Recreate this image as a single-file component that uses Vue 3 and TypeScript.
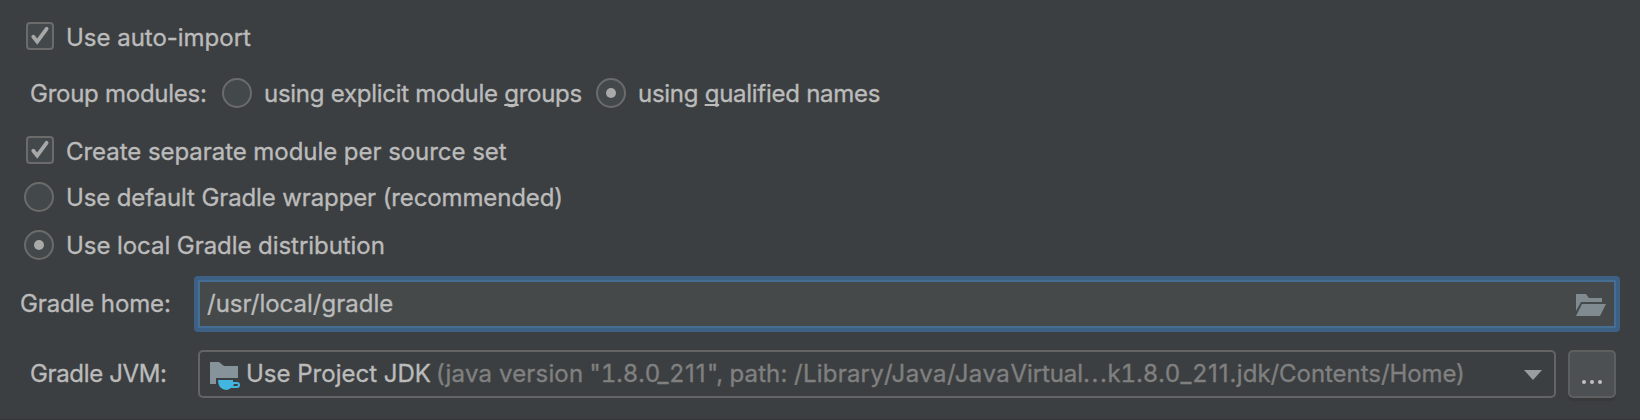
<script setup lang="ts">
import { ref } from 'vue'

const autoImport = ref(true)
const separateModules = ref(true)
const grouping = ref<'explicit' | 'qualified'>('qualified')
const distribution = ref<'wrapper' | 'local'>('local')
const gradleHome = ref('/usr/local/gradle')

interface Segment { text: string; width: number; spacing: number; tabular?: boolean }

const jdkDetails: Segment[] = [
  { text: '(java version ', width: 153.5, spacing: 0.17 },
  { text: '"1.8.0', width: 68, spacing: 0, tabular: true },
  { text: '_211', width: 49.5, spacing: 1 },
  { text: '", ', width: 22.5, spacing: 0 },
  { text: 'path: ', width: 64.5, spacing: 0.11 },
  { text: '/Library', width: 90, spacing: 0.23 },
  { text: '/Java', width: 63, spacing: 0.43 },
  { text: '/Java', width: 63.5, spacing: 0.5 },
  { text: 'Virtual', width: 72.5, spacing: -0.09 },
  { text: '...', width: 24.5, spacing: 1.6 },
  { text: 'k', width: 13, spacing: 0 },
  { text: '1.8.0', width: 60, spacing: 0.08, tabular: true },
  { text: '_211', width: 49, spacing: 1 },
  { text: '.jdk', width: 41, spacing: 0.22 },
  { text: '/Contents', width: 110.5, spacing: -0.05 },
  { text: '/Home)', width: 84, spacing: -0.1 },
]
</script>

<template>
  <main class="panel">
    <label class="row auto" @click="autoImport = !autoImport">
      <span class="box"><svg v-if="autoImport" viewBox="0 0 28 28"><path d="M7.3 14.8 11.2 19.7 20.6 6.8" /></svg></span>
      <span class="text t-auto">Use auto-import</span>
    </label>

    <div class="row modules">
      <span class="caption t-group">Group modules:</span>
      <label class="option explicit" @click="grouping = 'explicit'">
        <span class="radio" :class="{ on: grouping === 'explicit' }"></span>
        <span class="text t-radio">using explicit module <u>g</u>roups</span>
      </label>
      <label class="option" @click="grouping = 'qualified'">
        <span class="radio" :class="{ on: grouping === 'qualified' }"></span>
        <span class="text t-radio">using <u>q</u>ualified names</span>
      </label>
    </div>

    <label class="row separate" @click="separateModules = !separateModules">
      <span class="box"><svg v-if="separateModules" viewBox="0 0 28 28"><path d="M7.3 14.8 11.2 19.7 20.6 6.8" /></svg></span>
      <span class="text t-create">Create separate module per source set</span>
    </label>

    <label class="row wrapper" @click="distribution = 'wrapper'">
      <span class="radio" :class="{ on: distribution === 'wrapper' }"></span>
      <span class="text t-wrapper">Use default Gradle wrapper (recommended)</span>
    </label>

    <label class="row local" @click="distribution = 'local'">
      <span class="radio" :class="{ on: distribution === 'local' }"></span>
      <span class="text t-local">Use local Gradle distribution</span>
    </label>

    <div class="row home">
      <span class="caption t-home">Gradle home:</span>
      <div class="field">
        <span class="value">{{ gradleHome }}</span>
        <svg class="open" viewBox="0 0 30 22">
          <path d="M0 0H10L13 4H26V8H5L0 17Z" />
          <path d="M6 10H30L24 22H0Z" />
        </svg>
      </div>
    </div>

    <div class="row jvm">
      <span class="caption t-jvm">Gradle JVM:</span>
      <div class="combo">
        <svg class="jdk" viewBox="0 0 30 28">
          <path class="folder" d="M0 0H9L14 4H28V16H6V22H0Z" />
          <path class="cup" fill-rule="evenodd" d="M8 18H23V20H27A3 3 0 0 1 27 26H21Q18.500 28 16 28Q8 27 8 18ZM24 22L23 24H27A1 1 0 0 0 27 22Z" />
        </svg>
        <span class="name">Use Project JDK</span>
        <span class="details"><span
          v-for="(part, i) in jdkDetails"
          :key="i"
          class="part"
          :class="{ tabular: part.tabular }"
          :style="{ width: part.width + 'px', letterSpacing: part.spacing + 'px' }"
        >{{ part.text }}</span></span>
        <svg class="arrow" viewBox="0 0 18 10"><path d="M0 0H18L9 10Z" /></svg>
      </div>
      <button class="browse" type="button" aria-label="Browse"><i></i><i></i><i></i></button>
    </div>
  </main>
</template>

<style>
body {
  margin: 0;
  background: #3c3f41;
}
</style>

<style scoped>
.panel {
  box-sizing: border-box;
  width: 1640px;
  height: 420px;
  padding: 22px 20px 0 24px;
  overflow: hidden;
  background: #3c3f41;
  border-bottom: 1px solid #343537;
  color: #bbb;
  font: 24px/32px Inter, "Liberation Sans", sans-serif;
  -webkit-text-stroke: 0.35px currentColor;
  white-space: nowrap;
}
.row,
.option {
  display: flex;
  height: 30px;
}
.modules { margin-top: 26px; }
.separate { margin-top: 28px; }
.wrapper { margin-top: 16px; }
.local { margin-top: 18px; }

.box {
  box-sizing: border-box;
  flex: none;
  width: 28px;
  height: 28px;
  margin: 0 12px 0 2px;
  border: 2px solid #6b6b6b;
  border-radius: 4px;
  background: #43494a;
}
.box svg {
  display: block;
  width: 28px;
  height: 28px;
  margin: -2px;
}
.box path {
  fill: none;
  stroke: #a7a7a7;
  stroke-width: 3.8;
  stroke-linecap: round;
}
.radio {
  box-sizing: border-box;
  display: flex;
  align-items: center;
  justify-content: center;
  flex: none;
  width: 30px;
  height: 30px;
  margin-right: 12px;
  border: 2px solid #6b6b6b;
  border-radius: 50%;
  background: #43494a;
}
.radio.on::after {
  width: 10px;
  height: 10px;
  border-radius: 50%;
  background: #a9a9a9;
  content: "";
}
.caption { flex: none; }
u {
  text-decoration: underline 2px;
  text-decoration-skip-ink: none;
  text-underline-offset: 2px;
}
.modules .caption {
  width: 192px;
  margin-left: 6px;
}
.explicit { width: 374px; }

.t-auto { letter-spacing: -0.02px; }
.t-group { letter-spacing: -0.257px; }
.t-radio { letter-spacing: -0.27px; }
.t-create { letter-spacing: -0.05px; }
.t-wrapper { letter-spacing: -0.12px; }
.t-local { letter-spacing: -0.06px; }
.t-home { letter-spacing: -0.115px; }
.t-jvm { letter-spacing: -0.36px; }

.home {
  height: 56px;
  margin-top: 16px;
}
.home .caption {
  width: 174px;
  margin-left: -4px;
  padding-top: 12px;
}
.field {
  box-sizing: border-box;
  display: flex;
  align-items: center;
  justify-content: space-between;
  width: 1426px;
  padding: 0 8px;
  border: 4px solid #3d6185;
  border-radius: 4px;
  background: #45494a;
  box-shadow: inset 0 0 0 2px #466d94;
}
.value { padding-left: 1px; }
.open {
  width: 30px;
  height: 22px;
  margin: 1px 2px 0 0;
  fill: #7f8b91;
}

.jvm {
  height: 48px;
  margin-top: 18px;
}
.jvm .caption {
  width: 168px;
  margin-left: 6px;
  padding-top: 8px;
}
.combo {
  box-sizing: border-box;
  display: flex;
  width: 1358px;
  margin-right: 12px;
  padding: 6px 12px 0 10px;
  border: 2px solid #646464;
  border-radius: 5px;
}
.jdk {
  flex: none;
  width: 30px;
  height: 28px;
  margin: 4px 6px 0 0;
}
.folder { fill: #87939a; }
.cup { fill: #40b6e0; }
.name { width: 190px; }
.details {
  display: flex;
  flex: 1;
  color: #808080;
}
.part {
  flex: none;
  white-space: pre;
}
.tabular { font-variant-numeric: tabular-nums; }
.arrow {
  width: 18px;
  height: 10px;
  margin-top: 12px;
  fill: #9a9da0;
}
.browse {
  box-sizing: border-box;
  display: flex;
  justify-content: center;
  gap: 4px;
  width: 48px;
  height: 48px;
  padding: 28px 0 0;
  border: 2px solid #5e6060;
  border-radius: 5px;
  background: #4c5052;
  box-shadow: 0 3px 1px #37393b;
}
.browse i {
  width: 4px;
  height: 4px;
  border-radius: 50%;
  background: #c0c0c0;
}
</style>
